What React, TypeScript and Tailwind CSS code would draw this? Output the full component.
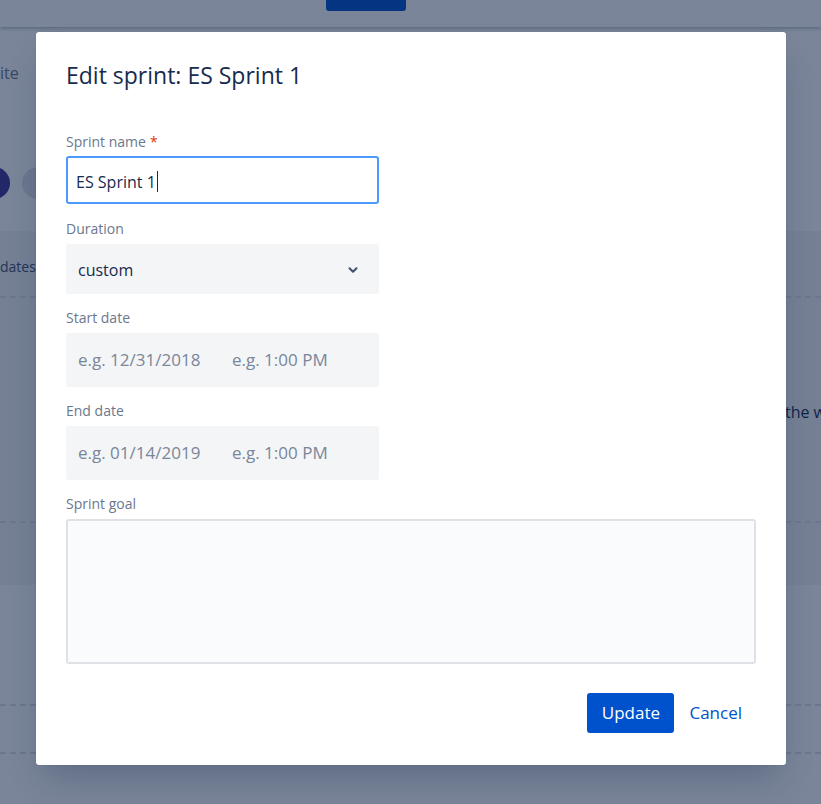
import { ChevronDown } from 'lucide-react';

const font = { fontFamily: '"Open Sans", "Noto Sans", sans-serif' };

function Label({ children, required }: { children: React.ReactNode; required?: boolean }) {
  return (
    <div className="flex h-5 items-center text-[14px] leading-5 text-[#6b778c]">
      {children}
      {required && <span className="ml-1 text-[#de350b]">*</span>}
    </div>
  );
}

function DateField({ date }: { date: string }) {
  return (
    <div className="mt-[5px] flex h-[54px] w-[313px] items-center rounded-[3px] bg-[#f4f5f7] pl-3 text-[17px] text-[#7a869a]">
      <span className="w-[154px]">{date}</span>
      <span>e.g. 1:00 PM</span>
    </div>
  );
}

function Backdrop() {
  return (
    <div className="absolute inset-0 overflow-hidden bg-white text-[#172b4d]">
      {/* top navigation */}
      <div className="relative h-[27px] bg-white shadow-[0_2px_3px_rgba(9,30,66,0.25)]">
        <div className="absolute left-[326px] top-0 h-[11px] w-[80px] rounded-b-[3px] bg-[#0052cc]" />
      </div>
      <div className="h-[35px]" />
      <div className="text-[16px] leading-[22px] text-[#6b778c]">ite</div>
      <div className="mt-[83px] flex items-center gap-[12px]">
        <div className="-ml-[22px] h-8 w-8 rounded-full bg-[#403294]" />
        <div className="h-8 w-8 rounded-full bg-[#dfe1e6]" />
      </div>
      <div className="mt-[16px] h-[16px]" />
      {/* board section */}
      <div className="h-[354px] bg-[#f4f5f7]">
        <div className="pt-[26px] text-[14px] leading-5 text-[#42526e]">dates</div>
        <div className="mt-[19px] border-t-2 border-dashed border-[#dfe1e6]" />
        <div className="mt-[104px] flex justify-end">
          <span className="-mr-[5px] text-[16px] leading-5 text-[#172b4d]">the w</span>
        </div>
        <div className="mt-[99px] border-t-2 border-dashed border-[#dfe1e6]" />
      </div>
      <div className="mt-[119px] border-t-2 border-dashed border-[#dfe1e6]" />
      <div className="mt-[46px] border-t-2 border-dashed border-[#dfe1e6]" />
      <div className="absolute inset-0 bg-[#091e42]/[0.54]" />
    </div>
  );
}

export default function App() {
  return (
    <div className="relative h-[804px] w-[821px] overflow-hidden" style={font}>
      <Backdrop />
      <div className="absolute left-[36px] top-[32px] h-[733px] w-[750px] rounded-[3px] bg-white px-[30px] pt-[27px] shadow-[0_0_1px_rgba(9,30,66,0.31),0_20px_32px_-8px_rgba(9,30,66,0.25)]">
        <h1 className="h-8 text-[23px] leading-8 text-[#172b4d]">Edit sprint: ES Sprint 1</h1>

        <div className="mt-[41px]">
          <Label required>Sprint name</Label>
          <div className="mt-1 flex h-[48px] w-[313px] items-center rounded-[3px] border-2 border-[#4c9aff] bg-white pl-[8px] pt-[3px] text-[16px] text-[#172b4d]">
            ES Sprint 1<span className="ml-[1px] h-[21px] w-px bg-[#172b4d]" />
          </div>
        </div>

        <div className="mt-[15px]">
          <Label>Duration</Label>
          <div className="mt-[5px] flex h-[50px] w-[313px] items-center justify-between rounded-[3px] bg-[#f4f5f7] pl-3 pr-[19px] pt-[2px] text-[16px] text-[#172b4d]">
            custom
            <ChevronDown className="h-[14px] w-[14px] text-[#42526e]" strokeWidth={3.5} />
          </div>
        </div>

        <div className="mt-[14px]">
          <Label>Start date</Label>
          <DateField date="e.g. 12/31/2018" />
        </div>

        <div className="mt-[14px]">
          <Label>End date</Label>
          <DateField date="e.g. 01/14/2019" />
        </div>

        <div className="mt-[14px]">
          <Label>Sprint goal</Label>
          <div className="mt-[5px] h-[145px] w-[690px] rounded-[3px] border-2 border-[#dfe1e6] bg-[#fafbfc]" />
        </div>

        <div className="mt-[29px] flex items-center justify-end gap-[15px] pr-[14px]">
          <button className="h-[40px] w-[87px] rounded-[3px] bg-[#0052cc] text-[17px] text-white">Update</button>
          <button className="text-[17px] text-[#0052cc]">Cancel</button>
        </div>
      </div>
    </div>
  );
}
